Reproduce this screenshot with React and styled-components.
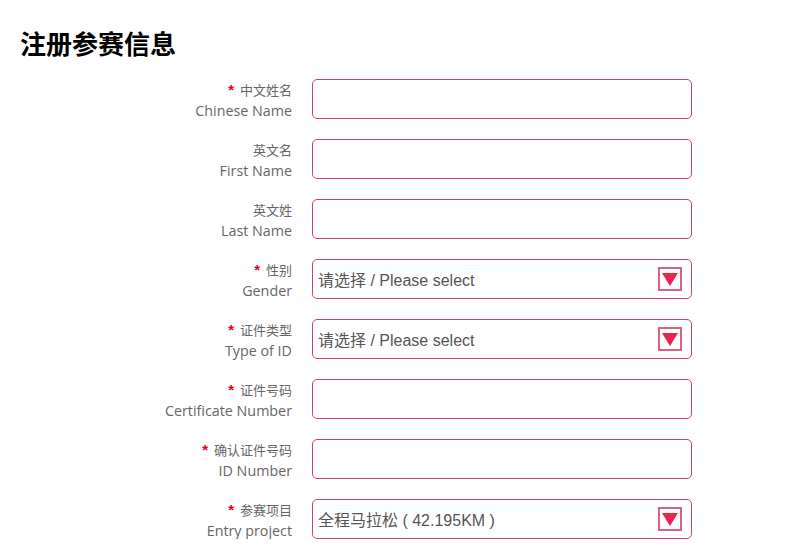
import React from "react";
import styled, { createGlobalStyle } from "styled-components";

const Global = createGlobalStyle`
  html, body { margin: 0; padding: 0; background: #fff; }
  body { font-family: "Open Sans", "Noto Sans CJK SC", sans-serif; }
`;

const Page = styled.div`
  padding: 24px 20px 0 20px;
`;

const Title = styled.h2`
  margin: 0 0 17px 0;
  font-family: "Noto Sans CJK SC", sans-serif;
  font-weight: 700;
  font-size: 26px;
  line-height: 38px;
  color: #000;
`;

const Form = styled.div`
  display: flex;
  flex-direction: column;
  gap: 20px;
`;

const Row = styled.div`
  display: flex;
  gap: 20px;
  align-items: flex-start;
  height: 40px;
`;

const Label = styled.div`
  width: 272px;
  height: 40px;
  padding-top: 1px;
  text-align: right;
  color: #666;
  overflow: visible;
`;

const Cn = styled.div`
  font-family: "Noto Sans CJK SC", sans-serif;
  font-size: 13px;
  line-height: 20px;
  height: 20px;
`;

const En = styled.div`
  font-family: "Open Sans", sans-serif;
  font-size: 14.3px;
  line-height: 20px;
  height: 20px;
  margin-top: 1px;
`;

const Star = styled.span`
  color: #e0001b;
  font-weight: 700;
  font-size: 15px;
  margin-right: 6px;
  font-family: "Liberation Sans", sans-serif;
`;

const Box = styled.div`
  box-sizing: border-box;
  width: 380px;
  height: 40px;
  border: 1px solid #c9436c;
  border-radius: 5px;
  display: flex;
  align-items: center;
  justify-content: space-between;
  padding: 0 9px 0 5px;
  font-family: "Liberation Sans", "Noto Sans CJK SC", sans-serif;
  font-size: 16px;
  color: #555;
`;

const Arrow = styled.div`
  box-sizing: border-box;
  width: 24px;
  height: 24px;
  border: 2px solid #df5f80;
  display: flex;
  align-items: center;
  justify-content: center;
`;

const Triangle = styled.div`
  width: 0;
  height: 0;
  border-left: 8px solid transparent;
  border-right: 8px solid transparent;
  border-top: 13px solid #e7244f;
  margin-top: 1px;
`;

const rows = [
  { cn: "中文姓名", en: "Chinese Name", req: true },
  { cn: "英文名", en: "First Name" },
  { cn: "英文姓", en: "Last Name" },
  { cn: "性别", en: "Gender", req: true, select: "请选择 / Please select" },
  { cn: "证件类型", en: "Type of ID", req: true, select: "请选择 / Please select" },
  { cn: "证件号码", en: "Certificate Number", req: true },
  { cn: "确认证件号码", en: "ID Number", req: true },
  { cn: "参赛项目", en: "Entry project", req: true, select: "全程马拉松 ( 42.195KM )" },
];

export default function App() {
  return (
    <>
      <Global />
      <Page>
        <Title>注册参赛信息</Title>
        <Form>
          {rows.map((r) => (
            <Row key={r.en}>
              <Label>
                <Cn>
                  {r.req && <Star>*</Star>}
                  {r.cn}
                </Cn>
                <En>{r.en}</En>
              </Label>
              <Box>
                {r.select ? (
                  <>
                    <span>{r.select}</span>
                    <Arrow>
                      <Triangle />
                    </Arrow>
                  </>
                ) : null}
              </Box>
            </Row>
          ))}
        </Form>
      </Page>
    </>
  );
}
